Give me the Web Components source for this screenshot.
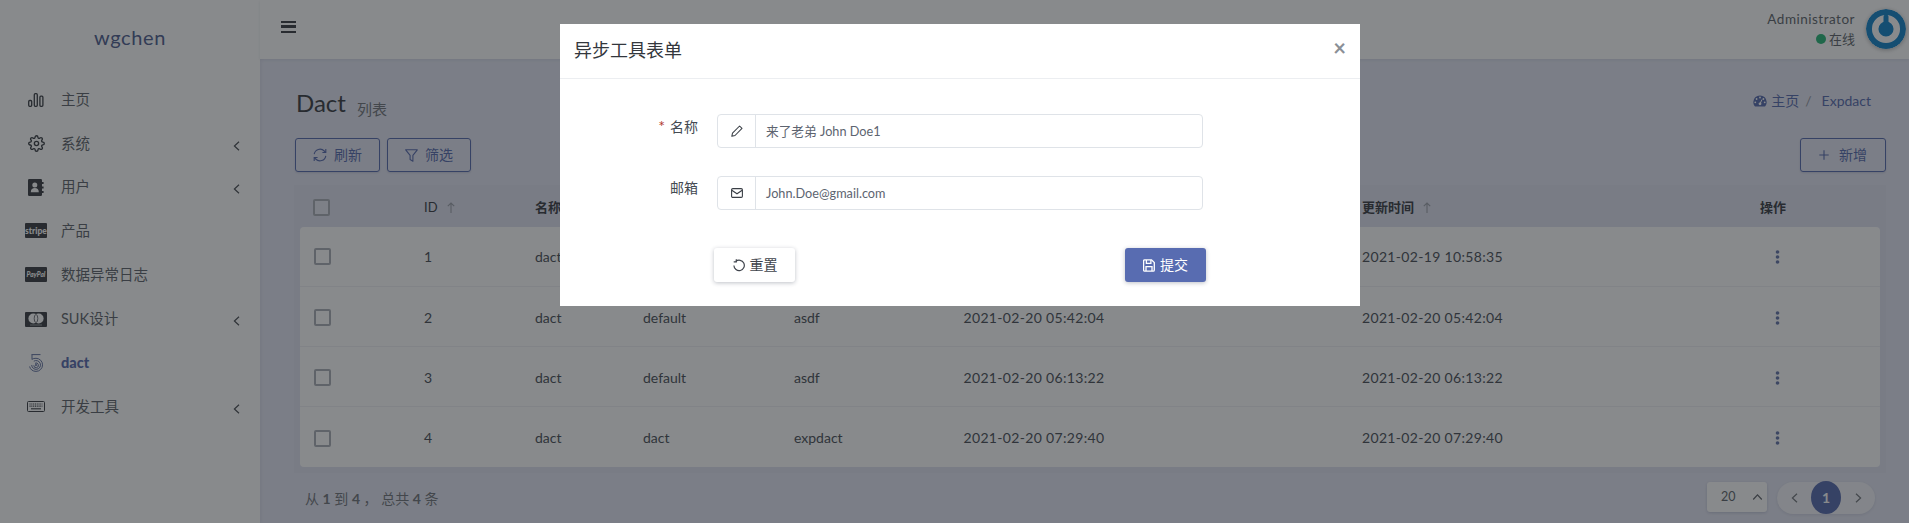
<!DOCTYPE html>
<html lang="zh">
<head>
<meta charset="utf-8">
<title>Dact</title>
<style>
  html, body { margin: 0; height: 523px; overflow: hidden; }
  body {
    position: relative;
    font: 14px/20px Lato, "Noto Sans CJK SC", sans-serif;
    color: #444a52;
    background: #e4e6f4;
  }
  .b { font-weight: 700; }
  .d { letter-spacing: .33px; }
</style>
</head>
<body>

<app-shell>
  <side-bar slot="side" brand="wgchen">
    <nav-item icon="chart" label="主页"></nav-item>
    <nav-item icon="gear" label="系统" more></nav-item>
    <nav-item icon="book" label="用户" more></nav-item>
    <nav-item icon="stripe" label="产品"></nav-item>
    <nav-item icon="paypal" label="数据异常日志"></nav-item>
    <nav-item icon="master" label="SUK设计" more style="margin-top:1px"></nav-item>
    <nav-item icon="print" label="dact" active></nav-item>
    <nav-item icon="keyboard" label="开发工具" more></nav-item>
  </side-bar>

  <top-bar slot="top" user="Administrator" status="在线"></top-bar>

  <page-head title-text="Dact" sub="列表">
    <ui-button slot="left" icon="sync" style="width:85px">刷新</ui-button>
    <ui-button slot="left" icon="filter" style="width:84px">筛选</ui-button>
    <ui-button slot="right" icon="plus" style="width:86px;gap:10px">新增</ui-button>
  </page-head>

  <data-table>
    <table-row head>
      <check-box></check-box>
      <sort-head>ID</sort-head>
      <span class="b">名称</span><span></span><span></span><span></span>
      <sort-head bold>更新时间</sort-head>
      <span class="b">操作</span>
    </table-row>
    <table-row>
      <check-box></check-box><span>1</span><span>dact</span><span></span><span></span><span></span>
      <span class="d">2021-02-19 10:58:35</span><row-menu></row-menu>
    </table-row>
    <table-row>
      <check-box></check-box><span>2</span><span>dact</span><span>default</span><span>asdf</span>
      <span class="d">2021-02-20 05:42:04</span><span class="d">2021-02-20 05:42:04</span><row-menu></row-menu>
    </table-row>
    <table-row>
      <check-box></check-box><span>3</span><span>dact</span><span>default</span><span>asdf</span>
      <span class="d">2021-02-20 06:13:22</span><span class="d">2021-02-20 06:13:22</span><row-menu></row-menu>
    </table-row>
    <table-row>
      <check-box></check-box><span>4</span><span>dact</span><span>dact</span><span>expdact</span>
      <span class="d">2021-02-20 07:29:40</span><span class="d">2021-02-20 07:29:40</span><row-menu></row-menu>
    </table-row>
  </data-table>

  <table-pager>从 <b>1</b> 到 <b>4</b> ， 总共 <b>4</b> 条</table-pager>
</app-shell>

<form-modal title-text="异步工具表单">
  <form-field label="名称" icon="pencil" required>来了老弟 John Doe1</form-field>
  <form-field label="邮箱" icon="mail">John.Doe@gmail.com</form-field>
  <ui-button slot="actions" variant="plain" icon="undo" style="width:81px;padding-left:1px">重置</ui-button>
  <ui-button slot="actions" variant="solid" icon="save" style="width:81px">提交</ui-button>
</form-modal>

<script>
const PRIMARY = "#5266ac";

const ICONS = {
  chart: `<svg width="16" height="14" viewBox="0 0 16 14" fill="none" stroke="currentColor" stroke-width="1.3"><rect x=".7" y="7.5" width="3" height="5.8" rx="1"/><rect x="6.3" y=".7" width="3" height="12.6" rx="1"/><rect x="11.9" y="3.2" width="3" height="10.1" rx="1"/></svg>`,
  gear: `<svg width="17" height="17" viewBox="0 0 24 24" fill="none" stroke="currentColor" stroke-width="1.9"><circle cx="12" cy="12" r="3"/><path d="M19.4 15a1.65 1.65 0 0 0 .33 1.82l.06.06a2 2 0 0 1 0 2.83 2 2 0 0 1-2.83 0l-.06-.06a1.65 1.65 0 0 0-1.82-.33 1.65 1.65 0 0 0-1 1.51V21a2 2 0 0 1-2 2 2 2 0 0 1-2-2v-.09A1.65 1.65 0 0 0 9 19.4a1.65 1.65 0 0 0-1.82.33l-.06.06a2 2 0 0 1-2.83 0 2 2 0 0 1 0-2.83l.06-.06a1.65 1.65 0 0 0 .33-1.82 1.65 1.65 0 0 0-1.51-1H3a2 2 0 0 1-2-2 2 2 0 0 1 2-2h.09A1.65 1.65 0 0 0 4.6 9a1.65 1.65 0 0 0-.33-1.82l-.06-.06a2 2 0 0 1 0-2.83 2 2 0 0 1 2.83 0l.06.06a1.65 1.65 0 0 0 1.82.33H9a1.65 1.65 0 0 0 1-1.51V3a2 2 0 0 1 2-2 2 2 0 0 1 2 2v.09a1.65 1.65 0 0 0 1 1.51 1.65 1.65 0 0 0 1.82-.33l.06-.06a2 2 0 0 1 2.83 0 2 2 0 0 1 0 2.83l-.06.06a1.65 1.65 0 0 0-.33 1.82V9a1.65 1.65 0 0 0 1.51 1H21a2 2 0 0 1 2 2 2 2 0 0 1-2 2h-.09a1.65 1.65 0 0 0-1.51 1z"/></svg>`,
  book: `<svg width="16" height="17" viewBox="0 0 16 17"><rect x="0" y="0" width="14" height="17" rx="1.2" fill="currentColor"/><path d="M14 3h1.6v2H14zM14 7.5h1.6v2H14zM14 12h1.6v2H14z" fill="currentColor"/><circle cx="6.8" cy="6" r="2.5" fill="#fff"/><path d="M2.8 13.2c0-3 1.6-4.2 4-4.2s4 1.2 4 4.2z" fill="#fff"/></svg>`,
  stripe: `<svg width="22" height="15" viewBox="0 0 22 15"><rect width="22" height="15" rx="1" fill="currentColor"/><text x="11" y="10.5" text-anchor="middle" font-family="Lato, sans-serif" font-size="8.5" font-weight="900" fill="#fff">stripe</text></svg>`,
  paypal: `<svg width="22" height="15" viewBox="0 0 22 15"><rect width="22" height="15" rx="1" fill="currentColor"/><text x="11" y="10" text-anchor="middle" font-family="Lato, sans-serif" font-size="6.5" font-style="italic" font-weight="900" fill="#fff">PayPal</text></svg>`,
  master: `<svg width="22" height="15" viewBox="0 0 22 15"><rect width="22" height="15" rx="1" fill="currentColor"/><circle cx="8.4" cy="6.5" r="5" fill="#fff"/><circle cx="13.6" cy="6.5" r="5" fill="#fff"/><ellipse cx="11" cy="6.5" rx="1.8" ry="4" fill="none" stroke="currentColor" stroke-width=".7"/><path d="M5 13h12" stroke="#fff" stroke-width=".8" opacity=".6"/></svg>`,
  print: `<svg width="14" height="18" viewBox="0 0 14 18" fill="none" stroke="currentColor" stroke-width="1"><path d="M2.5.6h9M3 .6v5"/><path d="M3 5.2c1-.6 2.500-.9 4-.9a6.500 6.500 0 0 1 0 13.100C3.800 17.400 1.200 15.400.6 12.500"/><path d="M4.800 7.200A4.400 4.400 0 1 1 2.700 11"/><path d="M6 9.300a2.300 2.300 0 1 1-1.200 2"/><circle cx="7" cy="11" r=".6" fill="currentColor"/></svg>`,
  keyboard: `<svg width="18" height="11" viewBox="0 0 18 11" fill="none" stroke="currentColor"><rect x=".5" y=".5" width="17" height="10" rx="1"/><path d="M2.5 3h13M2.5 5.2h13" stroke-width="1.2" stroke-dasharray="1.1 .7"/><path d="M4 7.800h10" stroke-width="1.1"/></svg>`,
  sync: `<svg width="14" height="14" viewBox="0 0 14 14" fill="none" stroke="currentColor" stroke-width="1.1"><path d="M1.2 6.200A5.900 5.900 0 0 1 11.300 3l1.500 1.500M12.800 7.800A5.900 5.900 0 0 1 2.700 11L1.200 9.500"/><path d="M12.800 1.100v3.400H9.400M1.200 12.900V9.500h3.400"/></svg>`,
  filter: `<svg width="13" height="13" viewBox="0 0 13 13" fill="none" stroke="currentColor" stroke-width="1.1"><path d="M.7.800h11.600L7.900 6.300v5.900L5.100 10.500V6.300z" stroke-linejoin="round"/></svg>`,
  plus: `<svg width="10" height="10" viewBox="0 0 10 10" stroke="currentColor" stroke-width="1.1"><path d="M5 .3v9.400M.3 5h9.400"/></svg>`,
  undo: `<svg width="12" height="13" viewBox="0 0 12 13" fill="none" stroke="currentColor" stroke-width="1.2"><path d="M2.800 2.400A5.200 5.200 0 1 1 .9 6.600"/><path d="M3.300 .3v2.600H.7"/></svg>`,
  save: `<svg width="12" height="13" viewBox="0 0 12 13" fill="none" stroke="currentColor" stroke-width="1.3"><path d="M1.600.8h6.900l2.800 2.800v7.300c0 .7-.5 1.200-1.200 1.200H1.600c-.6 0-1-.5-1-1.200V1.900c0-.7.4-1.100 1-1.100z"/><path d="M3.400.9v3.400h4.500V.9M3 12V7.700h6V12"/></svg>`,
  pencil: `<svg width="12" height="12" viewBox="0 0 12 12" fill="none" stroke="currentColor" stroke-width="1.05"><path d="M8.600 1 11 3.400 4 10.500l-3.200.8.700-3.200z" stroke-linejoin="round"/></svg>`,
  mail: `<svg width="12" height="10" viewBox="0 0 12 10" fill="none" stroke="currentColor" stroke-width="1.1"><rect x=".6" y=".6" width="10.800" height="8.800" rx="1.2"/><path d="M.8 2.200 6 5.800l5.200-3.600"/></svg>`,
  gauge: `<svg width="14" height="12" viewBox="0 0 14 12"><path d="M7 .4A6.700 6.700 0 0 0 .3 7.100c0 1.700.6 3.200 1.700 4.400h10c1.100-1.200 1.700-2.700 1.700-4.400A6.700 6.700 0 0 0 7 .4z" fill="currentColor"/><g fill="#fff"><circle cx="7" cy="2.500" r=".9"/><circle cx="3.600" cy="4" r=".9"/><circle cx="2.300" cy="7.300" r=".9"/><circle cx="11.700" cy="7.300" r=".9"/><circle cx="10.400" cy="4" r=".9"/><circle cx="7" cy="8.800" r="1.400"/></g><path d="M7 8.800 9 4.500" stroke="#fff"/></svg>`,
  chev: `<svg width="7" height="10" viewBox="0 0 7 10" fill="none" stroke="currentColor" stroke-width="1.2"><path d="M6 .7 1.400 5 6 9.300"/></svg>`
};

// every element renders once it is connected, so attributes can be read
class BaseElement extends HTMLElement {
  constructor() {
    super();
    this.attachShadow({ mode: "open" });
  }
  connectedCallback() {
    this.shadowRoot.innerHTML = `<style>${this.styles}</style>${this.markup}`;
  }
  attr(name) {
    return this.getAttribute(name) || "";
  }
}

class AppShell extends BaseElement {
  get styles() { return `
    :host { display: grid; grid-template-columns: 260px 1fr; grid-template-rows: 59px 1fr; height: 523px; }
    .side { grid-row: 1 / 3; display: block; }
    .content { display: flex; flex-direction: column; padding: 0 24px 0 36px; min-width: 0; }
  `; }
  get markup() { return `
    <div class="side"><slot name="side"></slot></div>
    <div><slot name="top"></slot></div>
    <div class="content"><slot></slot></div>
  `; }
}

class SideBar extends BaseElement {
  get styles() { return `
    :host { display: block; height: 523px; background: #fff; box-shadow: 1px 0 3px rgba(50,60,90,.08); position: relative; }
    .brand { height: 78px; box-sizing: border-box; padding-top: 25px; text-align: center; font-size: 20px; line-height: 24px; color: #4a5a8c; letter-spacing: .6px; }
  `; }
  get markup() { return `<div class="brand">${this.attr("brand")}</div><slot></slot>`; }
}

class NavItem extends BaseElement {
  get styles() { return `
    :host { display: flex; align-items: center; height: 43.7px; color: #5a5f66; font-size: 14.5px; }
    .ico { width: 61px; flex: none; padding-left: 25px; box-sizing: border-box; display: flex; justify-content: center; padding-right: 14px; color: #33373d; }
    .txt { flex: 1; }
    .more { width: 7px; margin-right: 20px; display: flex; color: #44484e; margin-top: 4px; }
    :host([active]) { color: ${PRIMARY}; font-weight: 900; }
    :host([active]) .ico { color: #5f6f9f; }
  `; }
  get markup() {
    return `<span class="ico">${ICONS[this.attr("icon")]}</span><span class="txt">${this.attr("label")}</span>`
      + (this.hasAttribute("more") ? `<span class="more">${ICONS.chev}</span>` : "");
  }
}

class TopBar extends BaseElement {
  get styles() { return `
    :host { display: flex; height: 59px; background: #fff; box-shadow: 0 1px 3px rgba(50,60,90,.1); position: relative; padding: 0 3px 0 21px; box-sizing: border-box; justify-content: space-between; }
    .burger { width: 15px; height: 12px; margin-top: 21px; border-top: 2.4px solid #33373d; border-bottom: 2.4px solid #33373d; position: relative; box-sizing: border-box; }
    .burger::after { content: ""; position: absolute; left: 0; right: 0; top: 2.4px; height: 2.4px; background: #33373d; }
    .user { display: flex; gap: 11px; padding-top: 9px; }
    .who { text-align: right; color: #5a5f66; font-size: 13.5px; line-height: 20px; }
    .name { letter-spacing: .5px; }
    .state { font-size: 13px; display: flex; justify-content: flex-end; align-items: center; gap: 3px; }
    .dot { width: 10px; height: 10px; border-radius: 50%; background: #21b573; }
    svg { display: block; box-shadow: 0 1px 4px rgba(0,0,0,.3); border-radius: 50%; }
  `; }
  get markup() { return `
    <div class="burger"></div>
    <div class="user">
      <div class="who">
        <div class="name">${this.attr("user")}</div>
        <div class="state"><span class="dot"></span>${this.attr("status")}</div>
      </div>
      <svg width="40" height="40" viewBox="0 0 40 40"><circle cx="20" cy="20" r="20" fill="#0b80c8"/><circle cx="20" cy="20" r="10.800" fill="none" stroke="#fff" stroke-width="6.500"/><path d="M20 8v14" stroke="#0b80c8" stroke-width="5" stroke-linecap="round"/></svg>
    </div>
  `; }
}

class PageHead extends BaseElement {
  get styles() { return `
    :host { display: block; }
    .line { display: flex; justify-content: space-between; align-items: flex-start; padding: 30px 14px 19px 0; height: 30px; }
    h1 { margin: -1px 0 0; font-size: 24px; line-height: 30px; font-weight: 400; color: #33373d; }
    small { font-size: 15px; color: #6e7278; margin-left: 11px; position: relative; top: 3px; }
    .crumb { display: flex; align-items: center; line-height: 24px; color: ${PRIMARY}; gap: 4px; }
    .sep { margin: 0 6px 0 2px; color: #8f93a0; }
    .bar { display: flex; justify-content: space-between; margin: 0 -1px; }
    .group { display: flex; gap: 7px; }
  `; }
  get markup() { return `
    <div class="line">
      <h1>${this.attr("title-text")}<small>${this.attr("sub")}</small></h1>
      <div class="crumb">${ICONS.gauge}<span>主页</span><span class="sep">/</span><span>Expdact</span></div>
    </div>
    <div class="bar">
      <div class="group"><slot name="left"></slot></div>
      <div class="group"><slot name="right"></slot></div>
    </div>
  `; }
}

class UiButton extends BaseElement {
  get styles() { return `
    :host { display: inline-flex; box-sizing: border-box; height: 34px; align-items: center; justify-content: center; gap: 7px; border-radius: 3px; border: 1px solid ${PRIMARY}; color: ${PRIMARY}; box-shadow: 0 1px 2px rgba(40,50,90,.15); }
    :host([variant]) { gap: 5px; border: 0; }
    :host([variant=plain]) { background: #fff; color: #3f444c; box-shadow: 0 1px 4px rgba(40,50,70,.3); }
    :host([variant=solid]) { background: #586cb1; color: #fff; box-shadow: 0 1px 4px rgba(40,50,70,.3); }
    svg { display: block; }
  `; }
  get markup() { return `${ICONS[this.attr("icon")]}<slot></slot>`; }
}

class DataTable extends BaseElement {
  get styles() { return `
    :host { display: block; margin: 13px -1px 0 -2px; padding: 0 6px 6px; background: #dfe1f0; --cols: 124px 111px 108px 151px 169.5px 398.5px 398px 1fr; }
  `; }
  get markup() { return `<slot></slot>`; }
}

class TableRow extends BaseElement {
  get styles() { return `
    :host { display: grid; grid-template-columns: var(--cols); align-items: center; height: 60px; background: #fff; border-bottom: 1px solid #f0f1f4; box-sizing: border-box; padding-top: 2px; }
    :host([head]) { height: 42px; background: transparent; border: 0; color: #33373d; font-size: 13px; }
    :host(:nth-child(2)) { border-radius: 4px 4px 0 0; padding-top: 0; }
    :host(:last-child) { border: 0; border-radius: 0 0 4px 4px; }
  `; }
  get markup() { return `<slot></slot>`; }
}

class CheckBox extends BaseElement {
  get styles() { return `
    :host { display: block; width: 17px; height: 17px; box-sizing: border-box; margin-left: 14px; border: 2px solid #a8adb4; border-radius: 2px; background: #fff; }
    :host-context(table-row[head]) { margin-left: 13px; background: #e8eaf4; }
  `; }
  get markup() { return ``; }
}

class SortHead extends BaseElement {
  get styles() { return `
    :host { display: flex; align-items: center; gap: 9px; }
    :host([bold]) { font-weight: 700; }
    svg { color: #9a9fa8; }
  `; }
  get markup() { return `<slot></slot><svg width="8" height="11" viewBox="0 0 8 11" fill="none" stroke="currentColor" stroke-width="1.1"><path d="M4 11V1M.8 4.200 4 1l3.200 3.200"/></svg>`; }
}

class RowMenu extends BaseElement {
  get styles() { return `
    :host { display: block; padding-left: 15px; color: #6072a8; }
    svg { display: block; }
  `; }
  get markup() { return `<svg width="5" height="14" viewBox="0 0 5 14" fill="currentColor"><circle cx="2.5" cy="2" r="1.8"/><circle cx="2.5" cy="7" r="1.8"/><circle cx="2.5" cy="12" r="1.8"/></svg>`; }
}

class TablePager extends BaseElement {
  get styles() { return `
    :host { display: flex; justify-content: space-between; align-items: flex-start; margin: 0 -1px 0 -2px; padding: 9px 11px 0 11px; color: #6e7278; }
    .info { line-height: 34px; }
    .right { display: flex; gap: 10px; }
    .size { width: 60px; height: 30px; box-sizing: border-box; padding: 0 6px 0 14px; background: #fff; border-radius: 3px; box-shadow: 0 1px 3px rgba(40,50,90,.2); display: flex; justify-content: space-between; align-items: center; color: #5a5f66; font-size: 12.5px; }
    .pages { display: flex; width: 98px; height: 32px; background: #f4f5fa; border-radius: 16px; box-shadow: 0 1px 3px rgba(40,50,90,.12); color: #6e7278; }
    .nav { width: 34px; display: flex; align-items: center; justify-content: center; }
    .cur { width: 30px; height: 33px; margin-top: -1px; border-radius: 50%; background: ${PRIMARY}; color: #fff; font-weight: 700; display: flex; align-items: center; justify-content: center; }
    .flip { transform: scaleX(-1); display: flex; }
    .up { transform: rotate(90deg); display: flex; }
  `; }
  get markup() { return `
    <div class="info"><slot></slot></div>
    <div class="right">
      <div class="size"><span>20</span><span class="up">${ICONS.chev}</span></div>
      <div class="pages">
        <span class="nav">${ICONS.chev}</span>
        <span class="cur">1</span>
        <span class="nav"><span class="flip">${ICONS.chev}</span></span>
      </div>
    </div>
  `; }
}

class FormModal extends BaseElement {
  get styles() { return `
    :host { position: absolute; inset: 0; background: rgba(30,34,38,.53); display: block; }
    .dialog { width: 800px; margin: 24px 0 0 560px; background: #fff; color: #33373d; }
    header { height: 52px; display: flex; align-items: center; justify-content: space-between; padding: 0 14px 2px; border-bottom: 1px solid #eceef1; font-size: 18px; }
    .close { font-size: 22px; font-weight: 700; color: #8a8f96; margin-top: -4px; }
    .body { padding: 35px 0 24px; display: flex; flex-direction: column; gap: 28px; }
    .actions { display: flex; justify-content: space-between; width: 492px; margin: 10px 0 0 154px; }
  `; }
  get markup() { return `
    <div class="dialog">
      <header><span>${this.attr("title-text")}</span><span class="close">×</span></header>
      <div class="body">
        <slot></slot>
        <div class="actions"><slot name="actions"></slot></div>
      </div>
    </div>
  `; }
}

class FormField extends BaseElement {
  get styles() { return `
    :host { display: grid; grid-template-columns: 138px 486px; column-gap: 19px; }
    label { text-align: right; line-height: 24px; color: #444a52; }
    i { color: #b03a2e; font-style: normal; font-size: 16px; margin-right: 5px; }
    .input { display: flex; height: 34px; box-sizing: border-box; border: 1px solid #dfe3e8; border-radius: 4px; align-items: center; color: #5d6470; font-size: 12.7px; }
    .pre { width: 37px; height: 100%; display: flex; align-items: center; justify-content: center; border-right: 1px solid #dfe3e8; color: #3a3f46; flex: none; }
    .val { padding-left: 10px; }
  `; }
  get markup() { return `
    <label>${this.hasAttribute("required") ? "<i>*</i>" : ""}${this.attr("label")}</label>
    <div class="input"><span class="pre">${ICONS[this.attr("icon")]}</span><span class="val"><slot></slot></span></div>
  `; }
}

customElements.define("app-shell", AppShell);
customElements.define("side-bar", SideBar);
customElements.define("nav-item", NavItem);
customElements.define("top-bar", TopBar);
customElements.define("page-head", PageHead);
customElements.define("ui-button", UiButton);
customElements.define("data-table", DataTable);
customElements.define("table-row", TableRow);
customElements.define("check-box", CheckBox);
customElements.define("sort-head", SortHead);
customElements.define("row-menu", RowMenu);
customElements.define("table-pager", TablePager);
customElements.define("form-modal", FormModal);
customElements.define("form-field", FormField);
</script>
</body>
</html>
